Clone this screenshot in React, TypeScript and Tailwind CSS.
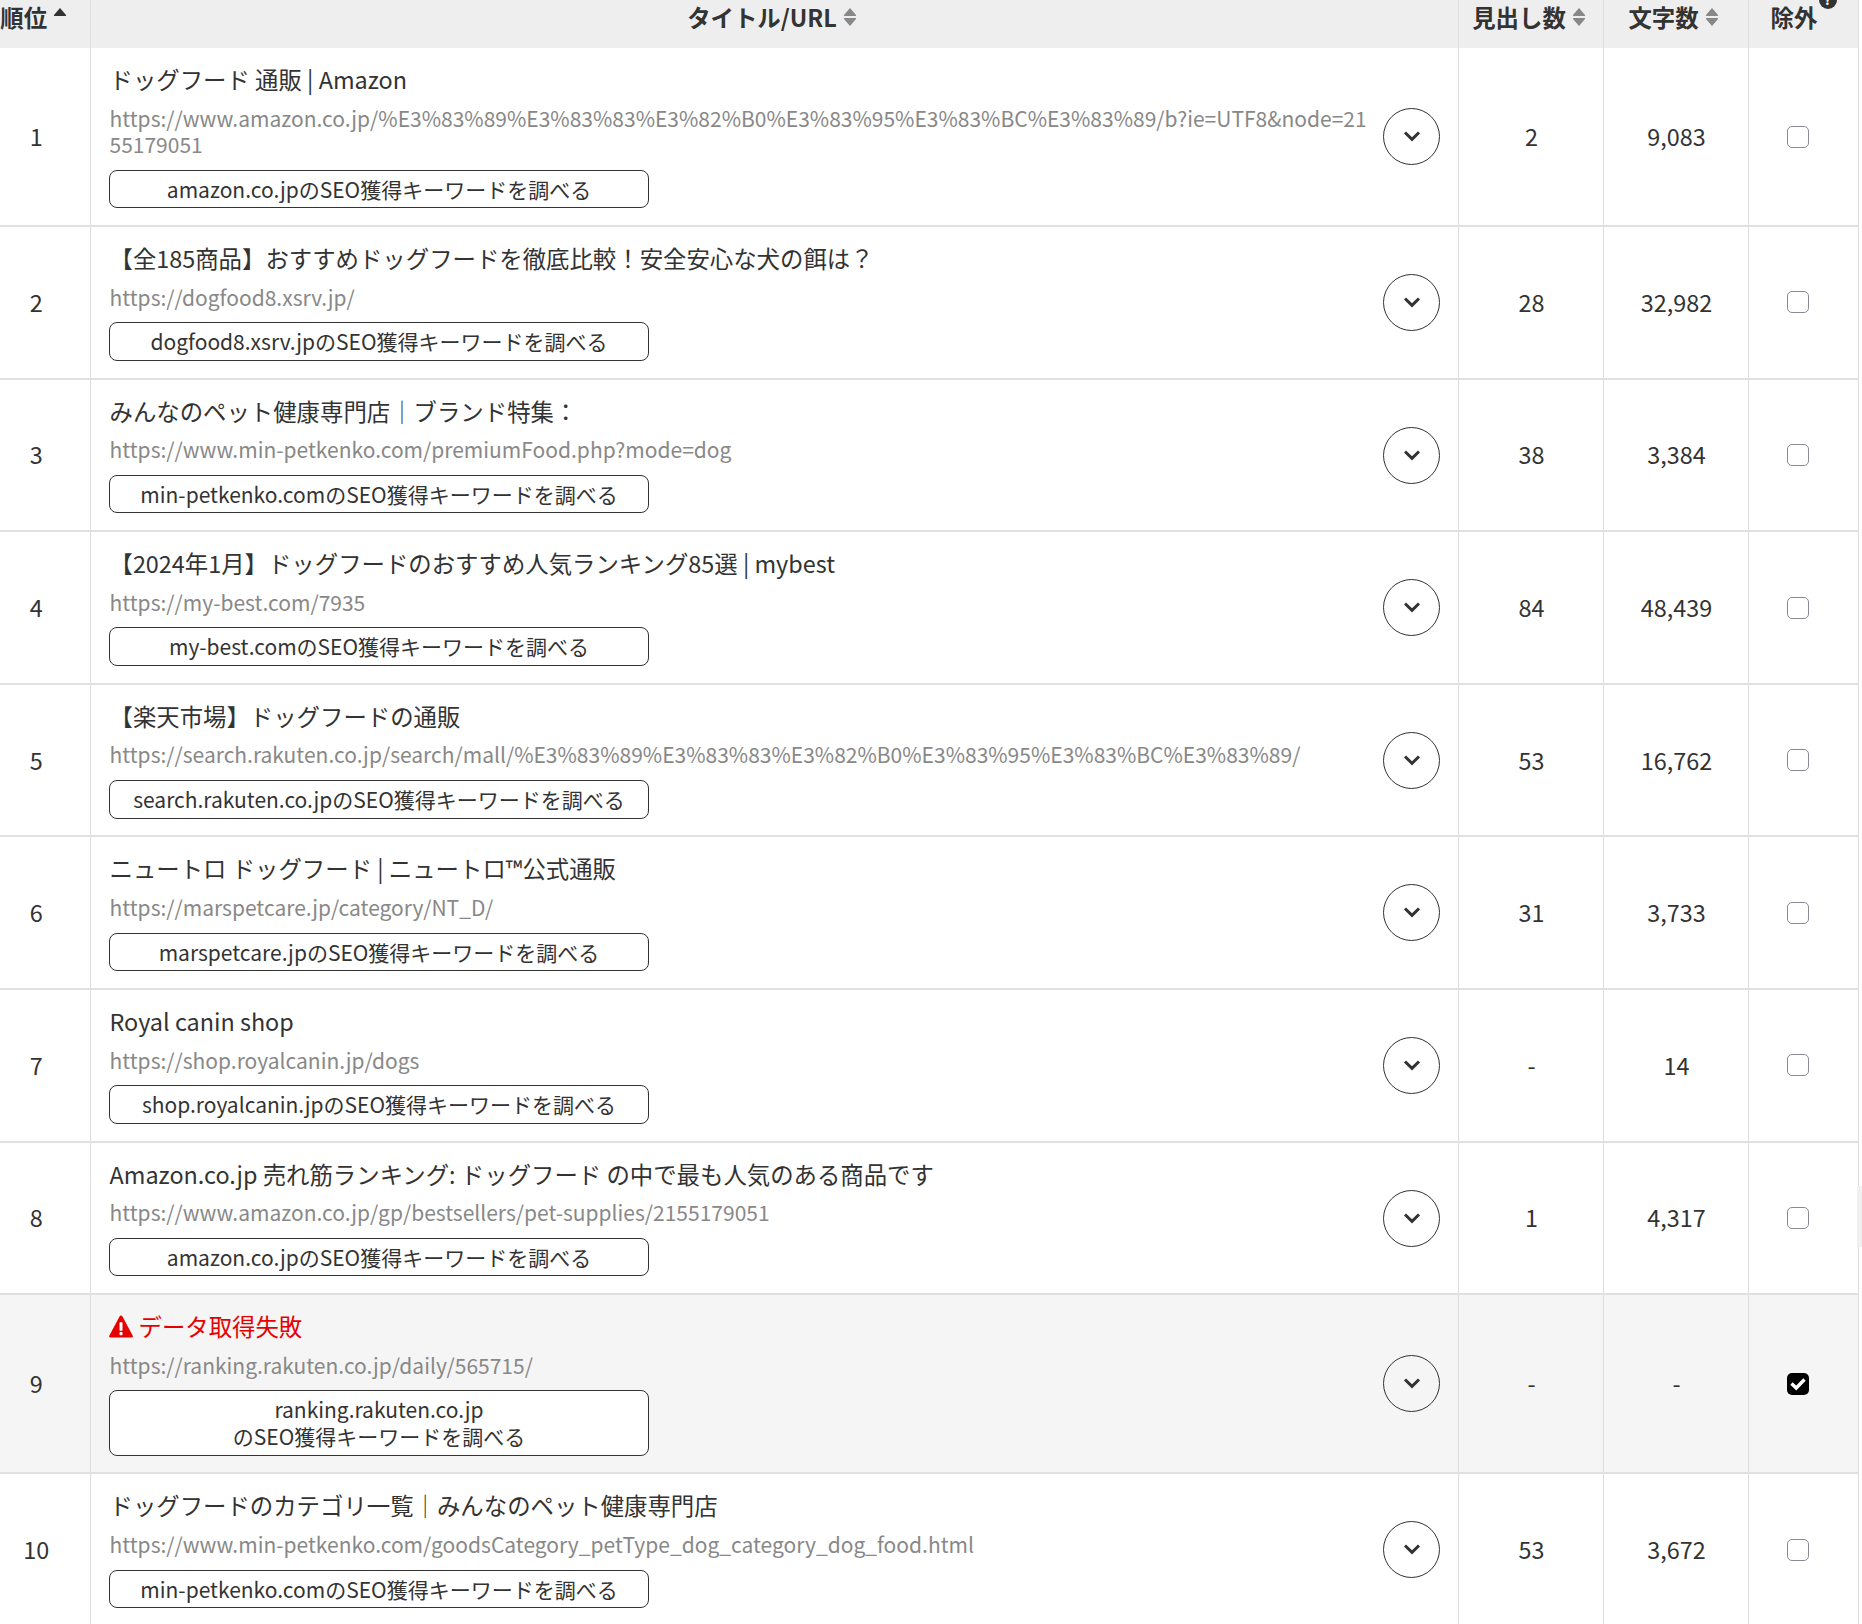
const ff = { fontFamily: '"Noto Sans CJK JP", "Noto Sans", sans-serif' };

type Row = { n: number; title: string; url: string; domain: string; h: string; c: string; failed?: boolean };

const rows: Row[] = [
  { n: 1, title: "ドッグフード 通販 | Amazon", url: "https://www.amazon.co.jp/%E3%83%89%E3%83%83%E3%82%B0%E3%83%95%E3%83%BC%E3%83%89/b?ie=UTF8&node=2155179051", domain: "amazon.co.jp", h: "2", c: "9,083" },
  { n: 2, title: "【全185商品】おすすめドッグフードを徹底比較！安全安心な犬の餌は？", url: "https://dogfood8.xsrv.jp/", domain: "dogfood8.xsrv.jp", h: "28", c: "32,982" },
  { n: 3, title: "みんなのペット健康専門店｜ブランド特集：", url: "https://www.min-petkenko.com/premiumFood.php?mode=dog", domain: "min-petkenko.com", h: "38", c: "3,384" },
  { n: 4, title: "【2024年1月】ドッグフードのおすすめ人気ランキング85選 | mybest", url: "https://my-best.com/7935", domain: "my-best.com", h: "84", c: "48,439" },
  { n: 5, title: "【楽天市場】ドッグフードの通販", url: "https://search.rakuten.co.jp/search/mall/%E3%83%89%E3%83%83%E3%82%B0%E3%83%95%E3%83%BC%E3%83%89/", domain: "search.rakuten.co.jp", h: "53", c: "16,762" },
  { n: 6, title: "ニュートロ ドッグフード | ニュートロ™公式通販", url: "https://marspetcare.jp/category/NT_D/", domain: "marspetcare.jp", h: "31", c: "3,733" },
  { n: 7, title: "Royal canin shop", url: "https://shop.royalcanin.jp/dogs", domain: "shop.royalcanin.jp", h: "-", c: "14" },
  { n: 8, title: "Amazon.co.jp 売れ筋ランキング: ドッグフード の中で最も人気のある商品です", url: "https://www.amazon.co.jp/gp/bestsellers/pet-supplies/2155179051", domain: "amazon.co.jp", h: "1", c: "4,317" },
  { n: 9, title: "データ取得失敗", url: "https://ranking.rakuten.co.jp/daily/565715/", domain: "ranking.rakuten.co.jp", h: "-", c: "-", failed: true },
  { n: 10, title: "ドッグフードのカテゴリ一覧｜みんなのペット健康専門店", url: "https://www.min-petkenko.com/goodsCategory_petType_dog_category_dog_food.html", domain: "min-petkenko.com", h: "53", c: "3,672" },
];

function Sort({ active }: { active?: boolean }) {
  return (
    <svg width="14" height="20" viewBox="0 0 14 20" className="shrink-0 mt-[6px]">
      <path d="M7 1 L13 8 Q13.5 9 12.5 9 H1.5 Q.5 9 1 8 Z" fill={active ? "#333" : "#888"} />
      {!active && <path d="M7 19 L13 12 Q13.5 11 12.5 11 H1.5 Q.5 11 1 12 Z" fill="#888" />}
    </svg>
  );
}

export default function App() {
  return (
    <div className="relative w-[1862px] h-[1624px] overflow-hidden bg-white text-[#333]" style={ff}>
      <table className="table-fixed border-collapse -ml-[20px] w-[1878px] text-[23.4px]">
        <colgroup>
          <col className="w-[110px]" />
          <col className="w-[1368px]" />
          <col className="w-[145px]" />
          <col className="w-[145px]" />
          <col className="w-[110px]" />
        </colgroup>
        <thead>
          <tr className="h-[48px] bg-[#eeeeee] font-bold">
            <th className="border-r border-[#dddddd] align-top p-0">
              <div className="h-[48px] flex items-start justify-center gap-[6px] pt-[1px] pr-[2px] leading-[32px]">順位<Sort active /></div>
            </th>
            <th className="border-r border-[#dddddd] align-top p-0">
              <div className="h-[48px] flex items-start justify-center gap-[6px] pt-[1px] pr-[4px] leading-[32px]">タイトル/URL<Sort /></div>
            </th>
            <th className="border-r border-[#dddddd] align-top p-0">
              <div className="h-[48px] flex items-start justify-center gap-[6px] pt-[1px] pr-[3px] leading-[32px]">見出し数<Sort /></div>
            </th>
            <th className="border-r border-[#dddddd] align-top p-0">
              <div className="h-[48px] flex items-start justify-center gap-[6px] pt-[1px] pr-[4px] leading-[32px]">文字数<Sort /></div>
            </th>
            <th className="border-r border-[#dddddd] align-top p-0">
              <div className="h-[48px] relative flex items-start justify-start pl-[22px] pt-[1px] leading-[32px]">
                除外
                <span className="absolute left-[70px] -top-[9px] w-[18px] h-[18px] rounded-full bg-[#333] text-white text-[13px] leading-[18px] text-center">?</span>
              </div>
            </th>
          </tr>
        </thead>
        <tbody>
          {rows.map((r) => (
            <tr key={r.n} className={`border-b-2 border-[#e0e0e0] ${r.failed ? "bg-[#f5f5f5]" : "bg-white"}`}>
              <td className="border-r border-[#dddddd] text-center p-0 pl-[3px]">{r.n}</td>
              <td className="border-r border-[#dddddd] p-0">
                <div className="flex items-center pl-[18px] pr-[18px] pt-[17px] pb-[16.85px]">
                  <div className="flex-1 min-w-0 pr-[13px]">
                    <div className={`pl-[1px] leading-[28px] ${r.failed ? "text-[#e60000]" : ""} flex items-center gap-[6px]`}>
                      {r.failed && (
                        <svg width="24" height="23" viewBox="0 0 24 22" preserveAspectRatio="none" className="shrink-0 -ml-[1px] mt-[1px]">
                          <path d="M12 .5 Q13 .5 13.6 1.6 L23.6 19.5 Q24.6 21.5 22.4 21.5 H1.6 Q-.6 21.5 .4 19.5 L10.4 1.6 Q11 .5 12 .5 Z" fill="#e60000" />
                          <rect x="10.5" y="7" width="3" height="8" rx=".6" fill="#fff" />
                          <rect x="10.5" y="16.3" width="3" height="3" rx=".6" fill="#fff" />
                        </svg>
                      )}
                      <span>{r.title}</span>
                    </div>
                    <div className="pl-[1px] mt-[11.5px] text-[21px] leading-[26.6px] text-[#888888] break-all">{r.url}</div>
                    <div className="mt-[12.05px] w-[540px] border border-[#333] rounded-lg bg-white text-center text-[21px] leading-[26.6px] py-[5px] pl-[1px]">
                      {r.failed ? (<>{r.domain}<br />のSEO獲得キーワードを調べる</>) : `${r.domain}のSEO獲得キーワードを調べる`}
                    </div>
                  </div>
                  <div className="w-[57px] h-[57px] shrink-0 rounded-full border border-[#333] flex items-center justify-center">
                    <svg width="18" height="12" viewBox="0 0 18 12" className="-mt-[1px] ml-[1px]">
                      <path d="M2 2.5 L9 9.3 L16 2.5" fill="none" stroke="#333" strokeWidth="3" />
                    </svg>
                  </div>
                </div>
              </td>
              <td className="border-r border-[#dddddd] text-center p-0 pl-[2px]">{r.h}</td>
              <td className="border-r border-[#dddddd] text-center p-0 pl-[2px]">{r.c}</td>
              <td className="border-r border-[#dddddd] p-0">
                <div className="flex justify-center pr-[10px]">
                  {r.failed ? (
                    <div className="w-[22px] h-[22px] rounded-[5px] bg-black flex items-center justify-center">
                      <svg width="16" height="14" viewBox="0 0 16 14">
                        <path d="M1.5 6.5 L6.2 11 L14.5 2.5" fill="none" stroke="#fff" strokeWidth="3.4" />
                      </svg>
                    </div>
                  ) : (
                    <div className="w-[22px] h-[22px] rounded-[5px] border border-[#8a8a96] bg-white" />
                  )}
                </div>
              </td>
            </tr>
          ))}
        </tbody>
      </table>
      <div className="absolute right-0 top-[1186px] w-[5px] h-[61px] bg-[#f0f0f0]" />
    </div>
  );
}
